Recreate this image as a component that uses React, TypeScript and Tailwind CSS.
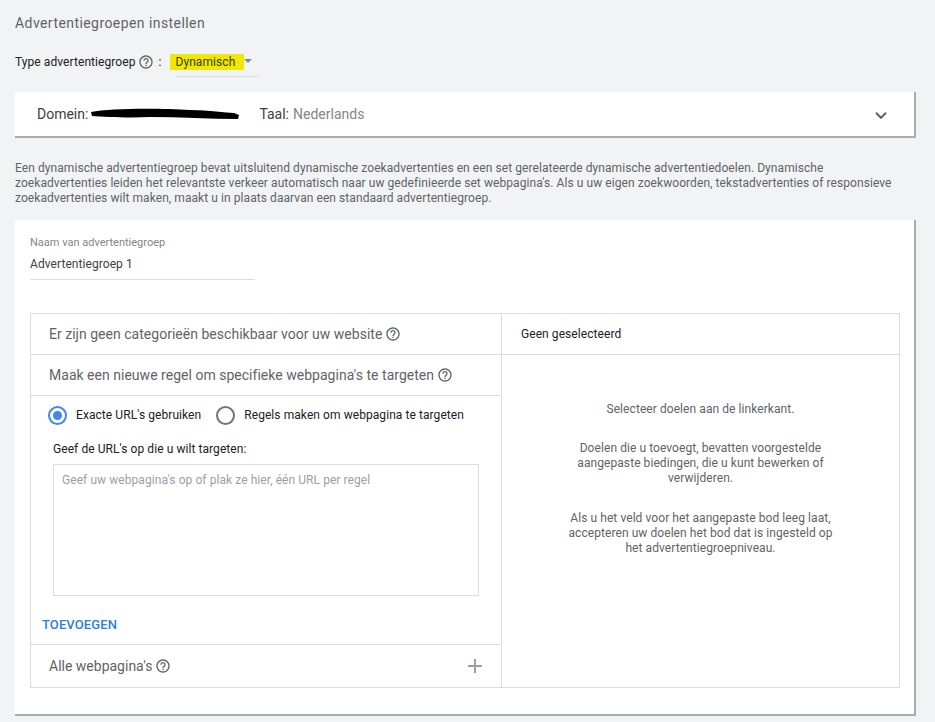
function Help({ className = '' }: { className?: string }) {
  return (
    <svg viewBox="0 0 24 24" className={`shrink-0 ${className}`} fill="#5f6368">
      <path d="M11 18h2v-2h-2v2zm1-16C6.48 2 2 6.48 2 12s4.48 10 10 10 10-4.48 10-10S17.52 2 12 2zm0 18c-4.41 0-8-3.59-8-8s3.59-8 8-8 8 3.59 8 8-3.59 8-8 8zm0-14c-2.21 0-4 1.79-4 4h2c0-1.1.9-2 2-2s2 .9 2 2c0 2-3 1.75-3 5h2c0-2.25 3-2.5 3-5 0-2.21-1.79-4-4-4z" />
    </svg>
  );
}

export default function App() {
  return (
    <div className="h-[722px] w-[935px] overflow-hidden bg-[#f1f3f4] pl-[15px] pr-[19px] font-['Roboto',sans-serif] text-[#3c4043]">
      <h1 className="pt-[14px] text-[14px] leading-[18px] tracking-[0.43px] text-[#5f6368]">Advertentiegroepen instellen</h1>

      {/* Type */}
      <div className="mt-[11px] flex h-[34px] items-start text-[12px] leading-[18px] tracking-[0.07px] text-[#202124]">
        <span className="mt-[10px]">Type advertentiegroep</span>
        <Help className="ml-[3px] mt-[11px] h-[16px] w-[16px]" />
        <span className="ml-[4px] mt-[10px]">:</span>
        <div className="relative ml-[9px] mt-[10px] h-[29px] w-[88px]">
          <div className="absolute left-[6px] right-0 top-[23px] border-b border-[#dadce0]" />
          <span className="absolute left-0 top-[1px] h-[16px] w-[74px] bg-[#f0e800] pl-[5px] text-[12px] leading-[16px] text-[#3c3c00]">Dynamisch</span>
          <span className="absolute left-[74px] top-[6px] h-0 w-0 border-x-[4px] border-t-[4px] border-x-transparent border-t-[#80868b]" />
        </div>
      </div>

      {/* Domain card */}
      <div className="mt-[15px] flex h-[46px] items-center border-b-2 border-r-2 border-b-[#a9abae] border-r-[#a9abae] bg-white pl-[22px] pr-[22px] text-[14px]">
        <span className="text-[#3c4043]">Domein:</span>
        <svg viewBox="0 0 150 12" className="ml-[2px] h-[12px] w-[150px]">
          <path d="M1 4 C20 0 70 0 100 2 C120 2 135 5 144 5 L149 7 L148 11 C120 11 90 9 60 9 C40 10 15 9 2 8 Z" fill="#000" />
        </svg>
        <span className="ml-[19px] text-[#3c4043]">Taal:</span>
        <span className="ml-[4px] text-[#80868b]">Nederlands</span>
        <svg viewBox="0 0 24 24" className="ml-auto mt-[2px] h-[22px] w-[22px]" fill="none" stroke="#5f6368" strokeWidth="2.2">
          <path d="M6.5 9.5 12 15l5.5-5.5" />
        </svg>
      </div>

      <p className="mt-[23px] w-[890px] text-[12px] leading-[15px] tracking-[0.07px] text-[#5f6368]">
        Een dynamische advertentiegroep bevat uitsluitend dynamische zoekadvertenties en een set gerelateerde dynamische advertentiedoelen. Dynamische zoekadvertenties leiden het relevantste verkeer automatisch naar uw gedefinieerde set webpagina's. Als u uw eigen zoekwoorden, tekstadvertenties of responsieve zoekadvertenties wilt maken, maakt u in plaats daarvan een standaard advertentiegroep.
      </p>

      {/* Main card */}
      <div className="mt-[14px] h-[496px] border-b-2 border-r-2 border-b-[#a9abae] border-r-[#a9abae] bg-white pl-[15px] pr-[14px] pt-[16px]">
        <div className="text-[11px] leading-[13px] text-[#80868b]">Naam van advertentiegroep</div>
        <div className="mt-[7px] h-[24px] w-[225px] border-b border-[#dadce0] text-[12px] leading-[16px] tracking-[0.07px] text-[#3c4043]">Advertentiegroep 1</div>

        <div className="mt-[33px] grid h-[375px] grid-cols-[471px_1fr] border border-[#dadce0]">
          {/* Left column */}
          <div className="flex flex-col border-r border-[#dadce0]">
            <div className="flex h-[41px] items-center gap-[3px] border-b border-[#dadce0] pl-[18px] text-[14px] tracking-[0.02px] text-[#5f6368]">
              Er zijn geen categorieën beschikbaar voor uw website
              <Help className="h-[16px] w-[16px]" />
            </div>
            <div className="flex h-[41px] items-center gap-[3px] border-b border-[#dadce0] pl-[18px] text-[14px] tracking-[0.02px] text-[#5f6368]">
              Maak een nieuwe regel om specifieke webpagina's te targeten
              <Help className="h-[16px] w-[16px]" />
            </div>
            <div className="flex h-[38px] items-center pl-[17px] text-[12px] tracking-[0.07px] text-[#202124]">
              <span className="flex h-[19px] w-[19px] items-center justify-center rounded-full border-2 border-[#4285f4]">
                <span className="h-[9px] w-[9px] rounded-full bg-[#4285f4]" />
              </span>
              <span className="ml-[9px]">Exacte URL's gebruiken</span>
              <span className="ml-[15px] h-[19px] w-[19px] rounded-full border-2 border-[#70757a]" />
              <span className="ml-[9px]">Regels maken om webpagina te targeten</span>
            </div>
            <div className="ml-[22px] mt-[7px] text-[12px] leading-[16px] tracking-[0.07px] text-[#202124]">Geef de URL's op die u wilt targeten:</div>
            <div className="ml-[22px] mt-[7px] h-[132px] w-[426px] border border-[#dadce0] px-[8px] py-[8px] text-[12px] leading-[15px] tracking-[0.07px] text-[#9aa0a6]">
              Geef uw webpagina's op of plak ze hier, één URL per regel
            </div>
            <div className="ml-[11px] mt-[21px] text-[13px] font-medium leading-[16px] tracking-[0.1px] text-[#2a7de1]">TOEVOEGEN</div>
            <div className="mt-[11px] flex flex-1 items-center gap-[3px] border-t border-[#dadce0] pl-[18px] pr-[19px] text-[14px] text-[#5f6368]">
              Alle webpagina's
              <Help className="h-[16px] w-[16px]" />
              <svg viewBox="0 0 14 14" className="ml-auto h-[14px] w-[14px]" fill="#9aa0a6">
                <path d="M6 0h2v6h6v2H8v6H6V8H0V6h6z" />
              </svg>
            </div>
          </div>

          {/* Right column */}
          <div className="flex flex-col">
            <div className="flex h-[41px] items-center border-b border-[#dadce0] pl-[19px] text-[12px] tracking-[0.07px] text-[#202124]">Geen geselecteerd</div>
            <div className="mx-auto mt-[47px] flex w-[280px] flex-col text-center text-[12px] leading-[15px] tracking-[0.07px] text-[#5f6368]">
              <p>Selecteer doelen aan de linkerkant.</p>
              <p className="mt-[24px]">Doelen die u toevoegt, bevatten voorgestelde<br />aangepaste biedingen, die u kunt bewerken of<br />verwijderen.</p>
              <p className="mt-[25px]">Als u het veld voor het aangepaste bod leeg laat,<br />accepteren uw doelen het bod dat is ingesteld op<br />het advertentiegroepniveau.</p>
            </div>
          </div>
        </div>
      </div>
    </div>
  );
}
